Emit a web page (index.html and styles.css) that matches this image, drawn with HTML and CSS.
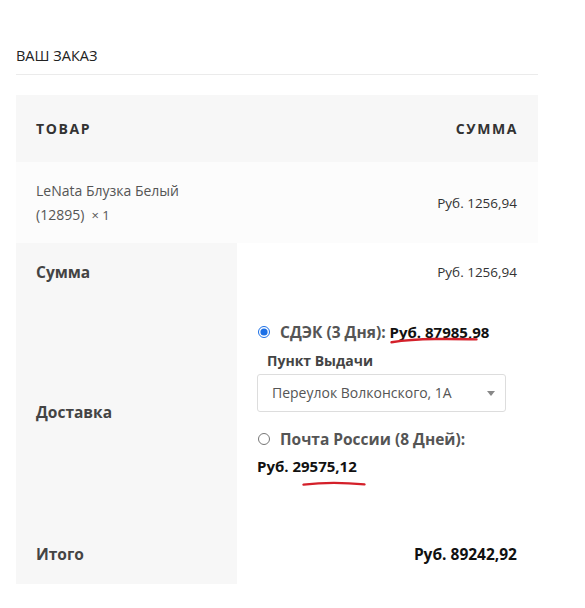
FILE: index.html
```html
<!DOCTYPE html>
<html lang="ru">
<head>
  <meta charset="UTF-8" />
  <title>Ваш заказ</title>
  <link rel="stylesheet" href="styles.css">
</head>
<body>
  <div class="order">
    <h3 class="order-title">ВАШ ЗАКАЗ</h3>

    <table class="order-table">
      <thead>
        <tr>
          <th class="col-name">ТОВАР</th>
          <th class="col-total">СУММА</th>
        </tr>
      </thead>
      <tbody>
        <tr class="cart-item">
          <td class="col-name">LeNata Блузка Белый<br>(12895)&nbsp; <span class="qty">×&nbsp;1</span></td>
          <td class="col-total">Руб. 1256,94</td>
        </tr>
      </tbody>
      <tfoot>
        <tr class="subtotal">
          <th>Сумма</th>
          <td class="col-total">Руб. 1256,94</td>
        </tr>
        <tr class="shipping">
          <th>Доставка</th>
          <td>
            <ul class="methods">
              <li>
                <label class="method">
                  <input type="radio" name="ship" checked>
                  <span>СДЭК (3 Дня): <span class="price mark">Руб. 87985,98<svg class="scribble s1" width="88" height="7" viewBox="0 0 88 7"><path d="M1.5 5.2 Q 20 2.2 45 2 T 86.5 2.4" /></svg></span></span>
                </label>
                <div class="pickup">
                  <div class="pickup-label">Пункт Выдачи</div>
                  <div class="select">
                    <span>Переулок Волконского, 1А</span>
                    <span class="arrow"></span>
                  </div>
                </div>
              </li>
              <li>
                <label class="method">
                  <input type="radio" name="ship">
                  <span>Почта России (8 Дней):</span>
                </label>
                <div class="price second">Руб. 29575,12<svg class="scribble s2" width="64" height="7" viewBox="0 0 64 7"><path d="M1.5 4.6 Q 30 1.2 62.5 4.4" /></svg></div>
              </li>
            </ul>
          </td>
        </tr>
        <tr class="grand">
          <th>Итого</th>
          <td class="col-total"><strong>Руб. 89242,92</strong></td>
        </tr>
      </tfoot>
    </table>
  </div>
</body>
</html>
```

FILE: styles.css
```css
body {
  font-family: 'Open Sans', 'Noto Sans', sans-serif;
  font-size: 14px;
  color: #333;
  background: #fff;
  margin: 0;
  padding: 0 16px;
}

.order {
  width: 522px;
}

.order-title {
  margin: 0;
  padding: 46px 0 8px;
  font-size: 14.5px;
  font-weight: 400;
  line-height: 20px;
  color: #222;
  border-bottom: 1px solid #ebebeb;
}

.order-table {
  width: 100%;
  margin-top: 20px;
  border-collapse: collapse;
  line-height: 24px;
}

.order-table th,
.order-table td {
  padding: 16.5px 20px;
  text-align: left;
  vertical-align: middle;
}

.order-table thead th {
  background: #f7f7f7;
  padding: 21.5px 20px;
  font-weight: 700;
  font-size: 14px;
  letter-spacing: 1.6px;
  color: #333;
}

.order-table .col-total {
  text-align: right;
  padding-right: 21px;
  font-size: 13.5px;
}

.order-table thead th.col-total {
  padding-right: 20px;
  font-size: 14px;
}

.cart-item td {
  background: #fcfcfc;
  color: #555;
}

.cart-item td.col-total {
  color: #333;
}

.qty {
  font-size: 13px;
}

tfoot th {
  width: 181px;
  background: #f7f7f7;
  font-weight: 700;
  font-size: 15.5px;
  color: #444;
}

tfoot td {
  background: #fff;
}

.shipping td {
  padding-top: 20px;
  padding-bottom: 46px;
}

.methods {
  list-style: none;
  margin: 0;
  padding: 0;
}

.method {
  display: flex;
  align-items: center;
  gap: 10px;
  font-weight: 700;
  font-size: 15.5px;
  color: #555;
}

.method input {
  margin: 0 0 0 1px;
  width: 12px;
  height: 12px;
  accent-color: #1b6fe6;
}

.price {
  color: #111;
  font-weight: 700;
  font-size: 15px;
}

.mark {
  position: relative;
}

.scribble {
  position: absolute;
  left: 0;
  overflow: visible;
}

.scribble path {
  fill: none;
  stroke: #d4202a;
  stroke-width: 2.4;
  stroke-linecap: round;
}

.s1 {
  top: 15px;
}

.pickup {
  margin-top: 5px;
}

.pickup-label {
  font-weight: 700;
  color: #444;
  padding-left: 10px;
}

.select {
  margin-top: 1px;
  width: 249px;
  height: 38px;
  box-sizing: border-box;
  border: 1px solid #ddd;
  border-radius: 3px;
  padding: 0 10px 0 14px;
  display: flex;
  align-items: center;
  justify-content: space-between;
  color: #555;
}

.arrow {
  width: 0;
  height: 0;
  border-left: 4px solid transparent;
  border-right: 4px solid transparent;
  border-top: 5px solid #888;
}

.methods li + li {
  margin-top: 15px;
}

.second {
  position: relative;
  margin-top: 3px;
  width: max-content;
}

.s2 {
  top: 25.5px;
  left: 45px;
}

.grand th,
.grand td {
  padding-top: 18px;
  padding-bottom: 18px;
}

.grand td.col-total {
  font-size: 15.5px;
}

.grand strong {
  color: #111;
}
```
